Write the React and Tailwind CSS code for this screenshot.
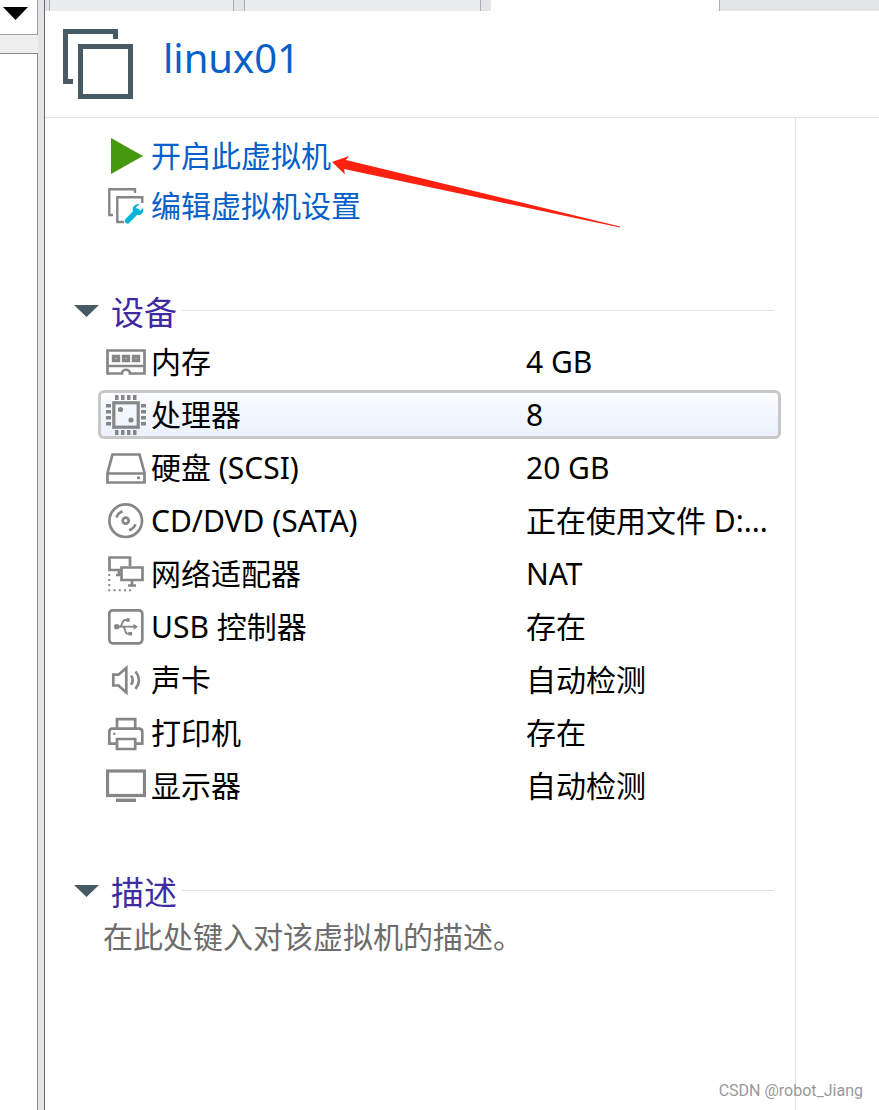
import React, { useState } from 'react';

const devices = [
  { id: 'memory', name: '内存', value: '4 GB' },
  { id: 'cpu', name: '处理器', value: '8' },
  { id: 'disk', name: '硬盘 (SCSI)', value: '20 GB' },
  { id: 'cd', name: 'CD/DVD (SATA)', value: '正在使用文件 D:...' },
  { id: 'network', name: '网络适配器', value: 'NAT' },
  { id: 'usb', name: 'USB 控制器', value: '存在' },
  { id: 'sound', name: '声卡', value: '自动检测' },
  { id: 'printer', name: '打印机', value: '存在' },
  { id: 'display', name: '显示器', value: '自动检测' },
];

const pins = [9, 15, 21, 27];

const icons = {
  memory: (
    <>
      <path d="M1.5 8.5H38.5V31.5H24C24 26.5 16 26.5 16 31.5H1.5Z" />
      <path d="M1.5 24H38.5" />
      <path d="M7.5 14.5h5v4h-5zM17.5 14.5h5v4h-5zM27.5 14.5h5v4h-5z" strokeWidth="3.4" />
    </>
  ),
  cpu: (
    <>
      <rect x="7.8" y="7.8" width="24.4" height="24.4" strokeWidth="3.2" />
      <g fill="currentColor" stroke="none">
        <circle cx="14.5" cy="14.5" r="2.6" />
        <circle cx="25" cy="25" r="2.6" />
        {pins.map((p) => (
          <path
            key={p}
            d={`M${p} 0h3.5v5h-3.5zM${p} 35h3.5v5h-3.5zM0 ${p}h5v3.5h-5zM35 ${p}h5v3.5h-5z`}
          />
        ))}
      </g>
    </>
  ),
  disk: (
    <>
      <path d="M1.5 25L6.5 6.5H33.5L38.5 25V34.5H1.5ZM1.5 25.5H38.5" />
      <circle cx="32.5" cy="29.8" r="1.6" fill="currentColor" stroke="none" />
    </>
  ),
  cd: (
    <>
      <circle cx="19.7" cy="19.7" r="16.3" />
      <circle cx="19.7" cy="19.7" r="3" />
      <path d="M10.5 16.5Q12 12 16.5 10.3M23.2 29.4Q27.5 28 29.5 23.3" />
    </>
  ),
  network: (
    <>
      <path d="M15 16H3.5V3.5H24V12M13 16v5M10 21h5" />
      <path d="M15.5 13.5h21V26h-21zM26 26v5M22 31.5h8" />
      <path
        d="M2.3 21h2M2.3 26h2M2.3 31h2M2.3 36.3h2M7.5 36.3h2M12.8 36.3h2M18 36.3h2M23 36.3h2"
        strokeWidth="2"
      />
    </>
  ),
  usb: (
    <>
      <rect x="3.3" y="3.3" width="33" height="33" rx="3.5" />
      <path d="M10.7 19.7H29M13.5 19.7C17 19.7 15.5 13 19 13H21M16.5 19.7C20 19.7 18 26.7 21.5 26.7H24" strokeWidth="1.8" />
      <g fill="currentColor" stroke="none">
        <circle cx="10.7" cy="19.7" r="2.7" />
        <circle cx="22" cy="13" r="2" />
        <path d="M27.5 16.7L32 19.7L27.5 22.7ZM22.5 25h3.6v3.6h-3.6z" />
      </g>
    </>
  ),
  sound: (
    <path d="M7.3 14.7H12.5L20.3 8V32.5L12.5 25.5H7.3ZM25 15.5Q28.5 20 25 24.8M29.5 11.5Q36.5 20 29.5 28.8" />
  ),
  printer: (
    <>
      <path d="M11 15.5V6.2H29.2V15.5M11 30.7H3.3V19Q3.3 15.7 6.5 15.7H33Q36.3 15.7 36.3 19V30.7H29.2" />
      <path d="M11 26H29.2V36H11Z" />
      <circle cx="8.3" cy="20.7" r="1.2" fill="currentColor" stroke="none" />
    </>
  ),
  display: (
    <>
      <rect x="1.5" y="5" width="37" height="24.5" strokeWidth="3.2" />
      <path d="M10 34.3h20" strokeWidth="3.4" />
    </>
  ),
};

const DeviceIcon = ({ id }) => (
  <svg
    width="40"
    height="40"
    viewBox="0 0 40 40"
    fill="none"
    stroke="currentColor"
    strokeWidth="2.7"
    className="shrink-0 text-[#868686]"
    aria-hidden="true"
  >
    {icons[id]}
  </svg>
);

const SectionHeader = ({ title, open, onToggle }) => (
  <div className="flex items-center h-[46px] pl-[29px] pr-[21px]">
    <button onClick={onToggle} aria-expanded={open} className="flex items-center gap-3">
      <svg width="25" height="14" viewBox="0 0 25 14" aria-hidden="true" className={open ? '' : '-rotate-90'}>
        <path d="M0 2H25L12.5 14Z" fill="#485a64" />
      </svg>
      <h2 className="pt-[6px] text-[33px] leading-10 text-[#3f2aa2]">{title}</h2>
    </button>
    <div className="flex-1 h-px ml-[5px] bg-[#e1e1e1]" />
  </div>
);

const Sidebar = () => (
  <aside className="flex flex-col w-[38px] shrink-0 bg-[#efefef]">
    <button
      aria-label="下拉"
      className="flex h-[35px] pl-[3px] pt-[7px] bg-white border-r border-b border-[#a0a0a0]"
    >
      <svg width="25" height="13" viewBox="0 0 25 13" aria-hidden="true">
        <path d="M0 0H25L12.5 13Z" fill="#000" />
      </svg>
    </button>
    <div className="flex-1 mt-[18px] bg-white border-t border-r border-[#858790]" />
  </aside>
);

const TabStrip = () => (
  <div className="flex h-[11px] bg-[#e3e4e6]">
    <div className="w-[185px] ml-1 border-x border-[#adadad] bg-[#ebecee]" />
    <div className="w-[237px] ml-[10px] border-x border-[#adadad] bg-[#ebecee]" />
    <div className="w-[229px] ml-[10px] border-r border-[#adadad] bg-white" />
  </div>
);

const Header = () => (
  <header className="flex h-[107px] pl-[18px] pt-[18px] border-b border-[#e1e1e1]">
    <svg width="70" height="70" viewBox="0 0 70 70" fill="none" stroke="#485a64" strokeWidth="5" aria-hidden="true">
      <path d="M52.5 10V2.5H2.5V52.5H10" />
      <rect x="17.5" y="17.5" width="50" height="50" />
    </svg>
    <h1 className="ml-[30px] text-[40px] leading-[58px] text-[#0561c9]">linux01</h1>
  </header>
);

const Actions = () => (
  <nav className="flex flex-col items-start pl-[61px] pt-[13px] text-[30px] leading-[50px] text-[#0561c9]">
    <div className="relative">
      <a href="#power-on" className="flex items-center gap-1">
        <svg width="41" height="36" viewBox="0 0 41 36" aria-hidden="true">
          <path d="M5 0L37 18L5 36Z" fill="#46980f" />
        </svg>
        开启此虚拟机
      </a>
      <svg
        width="290"
        height="74"
        viewBox="0 0 290 74"
        className="absolute left-full top-6 pointer-events-none"
        aria-hidden="true"
      >
        <path d="M1 7L18 1L15 5L289 71.5V72.5L13 14L14 19.5Z" fill="#ff2010" />
      </svg>
    </div>
    <a href="#settings" className="flex items-center gap-1">
      <svg width="41" height="36" viewBox="0 0 41 36" fill="none" stroke="#868686" strokeWidth="2.4" aria-hidden="true">
        <path d="M29 5V1.3H3.3V27H7" />
        <path d="M18 34H11.3V9.3H36.3V15" />
        <path d="M21.5 32.8L31 23" stroke="#00b5d8" strokeWidth="5.4" strokeLinecap="round" />
        <path
          d="M33.5 16.2C29 15.5 25.5 19.5 27 23.8C28.5 28 34.5 28.2 36.7 24.5C37.5 23.2 37.5 21.5 37 20L33.5 23.2L30.5 22.2L30 19.3Z"
          fill="#00b5d8"
          stroke="none"
        />
      </svg>
      编辑虚拟机设置
    </a>
  </nav>
);

const DeviceTable = ({ selected, onSelect }) => (
  <div className="pl-[53px] pr-[14px]">
    <table className="w-full table-fixed border-separate border-spacing-x-0 border-spacing-y-1 text-[30px] leading-[43px] text-black">
      <colgroup>
        <col className="w-[425px]" />
        <col />
      </colgroup>
      <tbody>
        {devices.map((device) => {
          const border =
            device.id === selected
              ? 'border-[#c8c8c8] bg-linear-to-b from-[#fafcff] to-[#ebf2fd]'
              : 'border-transparent';
          return (
            <tr key={device.id} className="h-[49px]">
              <th scope="row" className={`p-0 pl-[5px] border-y-3 border-l-3 rounded-l-md font-normal ${border}`}>
                <button onClick={() => onSelect(device.id)} className="flex items-center gap-[5px] w-full text-left">
                  <DeviceIcon id={device.id} />
                  {device.name}
                </button>
              </th>
              <td className={`p-0 pl-[3px] border-y-3 border-r-3 rounded-r-md whitespace-nowrap ${border}`}>
                {device.value}
              </td>
            </tr>
          );
        })}
      </tbody>
    </table>
  </div>
);

const App = () => {
  const [selected, setSelected] = useState('cpu');
  const [devicesOpen, setDevicesOpen] = useState(true);
  const [notesOpen, setNotesOpen] = useState(true);

  return (
    <div className="relative flex min-h-screen bg-white font-['Noto_Sans','Noto_Sans_CJK_SC',sans-serif]">
      <Sidebar />
      <div className="w-[7px] shrink-0 bg-[#e4e5e7] border-r border-[#69696b]" />
      <main className="flex flex-col flex-1 min-w-0">
        <TabStrip />
        <Header />
        <div className="flex flex-1">
          <div className="flex-1 min-w-0">
            <Actions />
            <section className="mt-14">
              <SectionHeader title="设备" open={devicesOpen} onToggle={() => setDevicesOpen(!devicesOpen)} />
              {devicesOpen && <DeviceTable selected={selected} onSelect={setSelected} />}
            </section>
            <section className="mt-[53px]">
              <SectionHeader title="描述" open={notesOpen} onToggle={() => setNotesOpen(!notesOpen)} />
              {notesOpen && (
                <textarea
                  aria-label="描述"
                  rows={1}
                  placeholder="在此处键入对该虚拟机的描述。"
                  className="block w-full h-12 pl-[58px] text-[30px] leading-12 resize-none overflow-hidden outline-none placeholder:text-[#6d6d6d]"
                />
              )}
            </section>
          </div>
          <aside className="w-[84px] shrink-0 border-l border-[#e1e1e1]" />
        </div>
      </main>
      <span className="absolute right-4 bottom-[7px] text-base leading-6 text-[#999] font-['Roboto',sans-serif]">
        CSDN @robot_Jiang
      </span>
    </div>
  );
};

export default App;
